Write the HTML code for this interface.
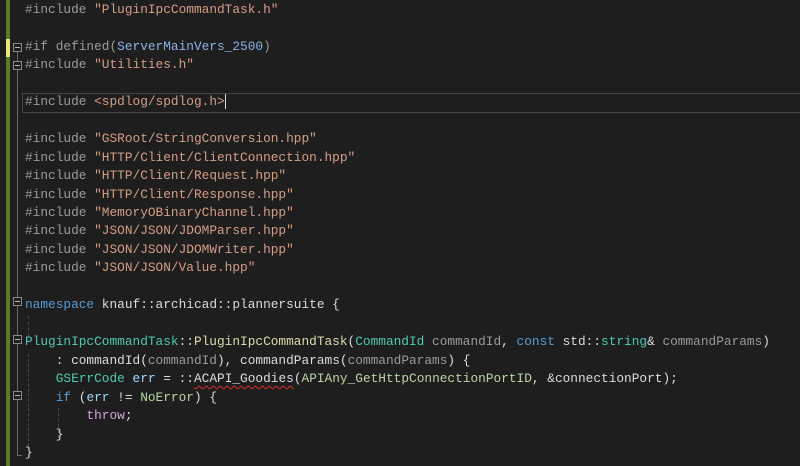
<!DOCTYPE html>
<html><head><style>
body{margin:0;width:800px;height:466px;background:#1e1e1e;overflow:hidden;position:relative;font-family:"Liberation Mono",monospace;font-size:12.8px;color:#dcdcdc}
.l{position:absolute;left:25px;height:18px;line-height:18px;white-space:pre}
.p{color:#9b9b9b}.s{color:#d69d85}.m{color:#8ab4e8}.k{color:#569cd6}.t{color:#4ec9b0}.g{color:#9a9a9a}.e{color:#b8d7a3}.c{color:#d8a0df}
.fb{position:absolute;left:13px;width:7px;height:7px;border:1px solid #8a8a8a;background:#1e1e1e}
.fb:after{content:"";position:absolute;left:1px;top:3px;width:5px;height:1px;background:#bbb}
.dg{position:absolute;width:0;border-left:1px dashed #4a4a4a}
.sq{text-decoration:underline wavy #e03030;text-underline-offset:3px;text-decoration-thickness:1px}
</style></head><body>
<div style="position:absolute;left:6px;top:0;width:4px;height:466px;background:#587a2d"></div>
<div style="position:absolute;left:6px;top:39px;width:4px;height:18px;background:#e6e67a"></div>
<div style="position:absolute;left:17px;top:52px;width:1px;height:404px;background:#6a6a6a"></div>
<div style="position:absolute;left:17px;top:455px;width:5px;height:1px;background:#6a6a6a"></div>
<div style="position:absolute;left:22px;top:93px;width:780px;height:18px;border:1px solid #464646"></div>
<div class="dg" style="left:28px;top:316px;height:20px"></div>
<div class="dg" style="left:28px;top:354px;height:92px"></div>
<div class="dg" style="left:58px;top:408px;height:30px"></div>
<div class="fb" style="top:43px"></div>
<div class="fb" style="top:61px"></div>
<div class="fb" style="top:297px"></div>
<div class="fb" style="top:335px"></div>
<div class="fb" style="top:391px"></div>
<div class="l" style="top:1px"><span class="p">#include </span><span class="s">"PluginIpcCommandTask.h"</span></div>
<div class="l" style="top:38px"><span class="p">#if defined(</span><span class="m">ServerMainVers_2500</span><span class="p">)</span></div>
<div class="l" style="top:56px"><span class="p">#include </span><span class="s">"Utilities.h"</span></div>
<div class="l" style="top:93px"><span class="p">#include </span><span class="s">&lt;spdlog/spdlog.h&gt;</span><span style="border-left:1px solid #ddd"> </span></div>
<div class="l" style="top:130px"><span class="p">#include </span><span class="s">"GSRoot/StringConversion.hpp"</span></div>
<div class="l" style="top:149px"><span class="p">#include </span><span class="s">"HTTP/Client/ClientConnection.hpp"</span></div>
<div class="l" style="top:167px"><span class="p">#include </span><span class="s">"HTTP/Client/Request.hpp"</span></div>
<div class="l" style="top:186px"><span class="p">#include </span><span class="s">"HTTP/Client/Response.hpp"</span></div>
<div class="l" style="top:204px"><span class="p">#include </span><span class="s">"MemoryOBinaryChannel.hpp"</span></div>
<div class="l" style="top:222px"><span class="p">#include </span><span class="s">"JSON/JSON/JDOMParser.hpp"</span></div>
<div class="l" style="top:241px"><span class="p">#include </span><span class="s">"JSON/JSON/JDOMWriter.hpp"</span></div>
<div class="l" style="top:259px"><span class="p">#include </span><span class="s">"JSON/JSON/Value.hpp"</span></div>
<div class="l" style="top:296px"><span class="k">namespace</span> knauf::archicad::plannersuite {</div>
<div class="l" style="top:333px"><span class="t">PluginIpcCommandTask</span>::<span style="color:#dcdcaa">PluginIpcCommandTask</span>(<span class="t">CommandId</span> <span class="g">commandId</span>, <span class="k">const</span> std::<span class="t">string</span>&amp; <span class="g">commandParams</span>)</div>
<div class="l" style="top:352px">    : commandId(<span class="g">commandId</span>), commandParams(<span class="g">commandParams</span>) {</div>
<div class="l" style="top:370px">    <span class="t">GSErrCode</span> <span style="color:#9cdcfe">err</span> = ::<span class="sq">ACAPI_Goodies</span>(<span class="e">APIAny_GetHttpConnectionPortID</span>, &amp;connectionPort);</div>
<div class="l" style="top:389px">    <span class="k">if</span> (<span style="color:#9cdcfe">err</span> != <span class="e">NoError</span>) {</div>
<div class="l" style="top:407px">        <span class="c">throw</span>;</div>
<div class="l" style="top:426px">    }</div>
<div class="l" style="top:444px">}</div>
</body></html>
